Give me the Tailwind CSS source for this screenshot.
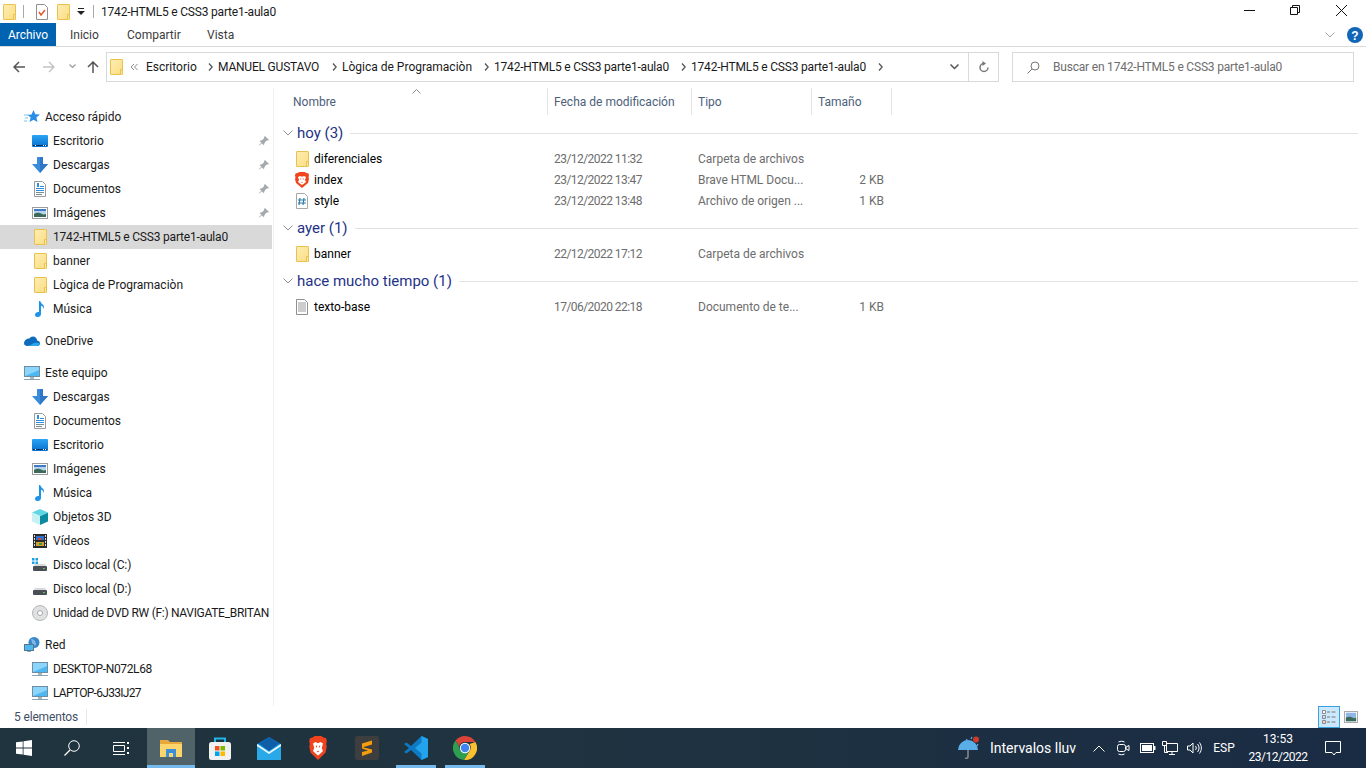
<!DOCTYPE html>
<html lang="es">
<head>
  <meta charset="UTF-8" />
  <title>1742-HTML5 e CSS3 parte1-aula0</title>
  <script src="https://cdn.jsdelivr.net/npm/@tailwindcss/browser@4"></script>
</head>
<body class="w-[1366px] h-[768px] overflow-hidden bg-white text-black text-[12px] leading-4 font-['Roboto',sans-serif] flex flex-col">

  <!-- shared icons -->
  <svg class="absolute w-0 h-0">
    <defs>
      <linearGradient id="skyG" x1="0" y1="0" x2="0" y2="1"><stop offset="0" stop-color="#2aa5f5"/><stop offset="1" stop-color="#0b6fd0"/></linearGradient>
      <linearGradient id="folderG" x1="0" y1="0" x2="1" y2="1"><stop offset="0" stop-color="#fdeeb5"/><stop offset="1" stop-color="#fcdc80"/></linearGradient>
    </defs>
    <symbol id="folder" viewBox="0 0 16 16">
      <rect x="2.500" y="0.500" width="12" height="15" rx="0.500" fill="url(#folderG)" stroke="#e8c24c"/>
      <path d="M12.500 15.500v-5h2v5" fill="#fbe6a0" stroke="#e8c24c"/>
    </symbol>
    <symbol id="desktop" viewBox="0 0 16 16">
      <rect x="0" y="2" width="16" height="12" rx="1" fill="url(#skyG)"/>
      <rect x="1" y="12" width="14" height="1" fill="#06345f"/>
      <rect x="3" y="12" width="1" height="1" fill="#fff"/><rect x="11" y="12" width="1" height="1" fill="#fff"/><rect x="13" y="12" width="1" height="1" fill="#fff"/>
    </symbol>
    <symbol id="download" viewBox="0 0 16 16">
      <path d="M5 0h6v7h5l-8 9-8-9h5z" fill="#3a8bdc"/>
      <path d="M8 0h3v7h5l-8 9z" fill="#2f78c6"/>
    </symbol>
    <symbol id="docs" viewBox="0 0 16 16">
      <path d="M2.500.5h8l3 3v12h-11z" fill="#fff" stroke="#9a9a9a"/>
      <path d="M5 2h2v4H5zM8 5h4v1H8zM4 7h8v1H4zM4 9h8v1H4z" fill="#2a8fe0"/>
      <path d="M4 11h8v1H4zM4 13h6v1H4z" fill="#7a8f8f"/>
    </symbol>
    <symbol id="images" viewBox="0 0 16 16">
      <rect x="0.500" y="2.500" width="15" height="11" fill="#fff" stroke="#9c9c9c"/>
      <rect x="2" y="4" width="12" height="8" fill="#b9d3ef"/>
      <path d="M2 9c3-2 6-1 8 0s3 0 4 0v3H2z" fill="#3c6a58"/>
      <path d="M2 4h12v2H2z" fill="#3f7cc8"/>
    </symbol>
    <symbol id="music" viewBox="0 0 16 16">
      <path d="M7 0h1.300c.4 3 4.700 3.500 3.700 8-.5-2-2-3-3-3.200V13c0 1.800-1.500 3-3.300 3C4.200 16 3 15.100 3 13.700c0-1.500 1.700-2.700 3.200-2.700.3 0 .6 0 .8.100z" fill="#1b93ea"/>
    </symbol>
    <symbol id="onedrive" viewBox="0 0 16 16">
      <path d="M3.500 13h9.500c1.700 0 3-1.100 3-2.600 0-1.400-1.100-2.500-2.600-2.600C13 5.500 11.200 3.500 9.100 3.500 7.500 3.500 6.200 4.300 5.400 5.500 2.600 5.500 .3 7.600 0 10.200 0 11.900 1.500 13 3.500 13z" fill="#0f6cbd"/>
      <path d="M3.500 13h9.500c1.700 0 3-1.100 3-2.600-3-.9-4.300-.9-6-.3-2 .7-3 2.200-6.500 2.900z" fill="#28a8ea"/>
    </symbol>
    <symbol id="pc" viewBox="0 0 16 16">
      <rect x="0.500" y="1.500" width="15" height="10" fill="#4db7f2" stroke="#6d8ea3"/>
      <path d="M1 2h14v3C11 7 6 9 1 11z" fill="#8bd5fa"/>
      <path d="M6 12h4v2H6z" fill="#a7b5bc"/>
      <path d="M0 14h16v1H0z" fill="#8ea4b2"/>
    </symbol>
    <symbol id="cube" viewBox="0 0 16 16">
      <path d="M8 7l8-3.500v9L8 16z" fill="#0c8aa0"/>
      <path d="M8 7L0 3.500 8 0l8 3.500z" fill="#5fd6e4"/>
      <path d="M0 3.500L8 7v9l-8-3.500z" fill="#c6f0f2"/>
    </symbol>
    <symbol id="video" viewBox="0 0 16 16">
      <rect x="1" y="1" width="14" height="14" fill="#2b2b2b"/>
      <path d="M4 3h8v4H4z" fill="#2e6fd0"/><path d="M4 9h8v4H4z" fill="#d2a02e"/><path d="M6 5h3v2H6z" fill="#d2472e"/><path d="M7 10h3v2H7z" fill="#3c9a52"/>
      <path d="M2 2h1v2H2zM2 5h1v2H2zM2 8h1v2H2zM2 11h1v2H2zM13 2h1v2h-1zM13 5h1v2h-1zM13 8h1v2h-1zM13 11h1v2h-1z" fill="#d8d8d8"/>
    </symbol>
    <symbol id="disk" viewBox="0 0 16 16">
      <path d="M2 9l1-2h10l1 2z" fill="#d7dadd"/>
      <rect x="1" y="9" width="14" height="5" rx="1" fill="#4a4f55"/>
      <rect x="11" y="11" width="2" height="1" fill="#4fd34f"/>
    </symbol>
    <symbol id="diskwin" viewBox="0 0 16 16">
      <use href="#disk"/>
      <path d="M0 1h2.500v2.500H0zM3.500 1H6v2.500H3.500zM0 4.500h2.500V7H0zM3.500 4.500H6V7H3.500z" fill="#1ba1e2"/>
    </symbol>
    <symbol id="dvd" viewBox="0 0 16 16">
      <circle cx="8" cy="8" r="7.500" fill="#dfe1e2" stroke="#b5b7b8"/>
      <circle cx="8" cy="8" r="2.500" fill="#fff" stroke="#a8a8a8"/>
    </symbol>
    <symbol id="network" viewBox="0 0 16 16">
      <circle cx="10" cy="5.500" r="5.500" fill="#3a86c8"/>
      <path d="M7 2c3 0 5 2 5 6l-3 1z" fill="#7db8e6"/>
      <rect x="0.500" y="7.500" width="9" height="6" fill="#4db7f2" stroke="#56788c"/>
      <path d="M3 14h4v1H3z" fill="#8ea4b2"/>
    </symbol>
    <symbol id="pin" viewBox="0 0 12 12">
      <path d="M7 1l4 4-1 .5-1.500 0L6.500 8l-.3 1.500L5.500 10 3.700 8.200 1.500 10.500 1 10l2.300-2.200L1.700 6.200l.8-.8 1.500-.2L6.200 3V1.800z" fill="#a3a9ae"/>
    </symbol>
    <symbol id="brave" viewBox="0 0 16 16">
      <path d="M3.500 1L5.500 0h5l2 1 2 .5.500 2-.5 2 .5 1.500-1 4-3 2.500L8 16l-3-2.500-3-2.500-1-4 .5-1.500-.5-2 .5-2z" fill="#f1441d"/>
      <path d="M4 5l2-1 2 .8L10 4l2 1-1 3 1 2-2.500 2L8 13l-1.500-1L4 10l1-2z" fill="#fff"/>
      <path d="M6 6.500h1.300L7 8zM10 6.500H8.700L9 8zM7 10h2l-1 1z" fill="#f1441d"/>
    </symbol>
    <symbol id="hashfile" viewBox="0 0 16 16">
      <path d="M2.500.5h8l3 3v12h-11z" fill="#fff" stroke="#a8a8a8"/>
      <path d="M6 5l-1 7M10 5l-1 7M4 7h8M4 10h8" stroke="#2f7fa8" stroke-width="1.200" fill="none"/>
    </symbol>
    <symbol id="textfile" viewBox="0 0 16 16">
      <path d="M2.500.5h8l3 3v12h-11z" fill="#fff" stroke="#8f8f8f"/>
      <path d="M4 4h8M4 6h8M4 8h8M4 10h8M4 12h8" stroke="#9a9a9a" fill="none"/>
    </symbol>
    <symbol id="crumb" viewBox="0 0 5 8">
      <path d="M1 .5L4.200 4 1 7.500" stroke="#555" stroke-width="1.300" fill="none"/>
    </symbol>
  </svg>

  <!-- title bar -->
  <div class="h-[23px] shrink-0 flex items-center relative">
    <svg class="w-4 h-4 ml-[1px]"><use href="#folder"/></svg>
    <div class="w-px h-[13px] bg-[#a9a9a9] ml-[6px]"></div>
    <svg class="w-4 h-4 ml-[10px]" viewBox="0 0 16 16"><path d="M2.500.5h8l3 3v12h-11z" fill="#fff" stroke="#8f8f8f"/><path d="M5 8l2 3 4-5" stroke="#e2572b" stroke-width="1.500" fill="none"/></svg>
    <svg class="w-4 h-4 ml-[5px]"><use href="#folder"/></svg>
    <svg class="w-[8px] h-[8px] ml-[6px]" viewBox="0 0 8 8"><path d="M1 0h6v1H1zM0 3h8L4 7z" fill="#222"/></svg>
    <div class="w-px h-[13px] bg-[#a9a9a9] ml-[8px]"></div>
    <div class="ml-[7px] text-[#1a1a1a] tracking-[-0.2px]">1742-HTML5 e CSS3 parte1-aula0</div>
    <div class="ml-auto flex items-center">
      <svg class="w-[46px] h-[23px]" viewBox="0 0 46 23"><path d="M17 10.500h11" stroke="#111" fill="none"/></svg>
      <svg class="w-[46px] h-[23px]" viewBox="0 0 46 23"><path d="M17.500 7.500h7v7h-7zM19.500 7.500v-2h7v7h-2" stroke="#111" fill="none"/></svg>
      <svg class="w-[46px] h-[23px]" viewBox="0 0 46 23"><path d="M17 5l11 11M28 5L17 16" stroke="#111" fill="none"/></svg>
      <div class="w-[1px]"></div>
    </div>
  </div>

  <!-- ribbon tabs -->
  <div class="h-[24px] shrink-0 flex items-stretch border-b border-[#dadbdc] text-[#3b3b3b]">
    <div class="w-[56px] bg-[#0063b1] text-white flex items-center justify-center">Archivo</div>
    <div class="ml-[14px] w-[57px] flex items-center">Inicio</div>
    <div class="w-[80px] flex items-center">Compartir</div>
    <div class="flex items-center">Vista</div>
    <div class="ml-auto flex items-center pr-[3px]">
      <svg class="w-[10px] h-[6px]" viewBox="0 0 10 6"><path d="M.5.500L5 5 9.500.500" stroke="#a5a5a5" fill="none"/></svg>
      <svg class="w-4 h-4 ml-[12px]" viewBox="0 0 16 16"><circle cx="8" cy="8" r="8" fill="#1266b8"/><text x="8" y="12.500" text-anchor="middle" font-size="12" font-weight="700" fill="#fff" font-family="Liberation Sans">?</text></svg>
    </div>
  </div>

  <!-- address row -->
  <div class="h-[41px] shrink-0 flex items-start pt-[5px]">
    <svg class="w-3 h-3 ml-[13px] mt-[9px]" viewBox="0 0 12 12"><path d="M6 1L1 6l5 5M1 6h11" stroke="#555" stroke-width="1.500" fill="none"/></svg>
    <svg class="w-3 h-3 ml-[18px] mt-[9px]" viewBox="0 0 12 12"><path d="M6 1l5 5-5 5M11 6H0" stroke="#c4c4c4" stroke-width="1.500" fill="none"/></svg>
    <svg class="w-[7px] h-[5px] ml-[14px] mt-[12px]" viewBox="0 0 7 5"><path d="M.5.500L3.500 3.500 6.500.500" stroke="#9a9a9a" stroke-width="1.200" fill="none"/></svg>
    <svg class="w-3 h-3 ml-[11px] mt-[9px]" viewBox="0 0 12 12"><path d="M1 6l5-5 5 5M6 1v11" stroke="#555" stroke-width="1.500" fill="none"/></svg>
    <div class="ml-[7px] w-[893px] h-[30px] border border-[#d9d9d9] flex items-center text-[#1a1a1a]">
      <svg class="w-4 h-4 ml-[1px] shrink-0"><use href="#folder"/></svg>
      <svg class="w-[8px] h-[8px] ml-[6px] shrink-0" viewBox="0 0 8 8"><path d="M4 1L1 4l3 3M7.500 1l-3 3 3 3" stroke="#8a8a8a" fill="none"/></svg>
      <div class="ml-[8px] w-[58px] shrink-0">Escritorio</div>
      <div class="w-[14px] shrink-0 flex justify-center pr-[1px]"><svg class="w-[5px] h-[8px]"><use href="#crumb"/></svg></div>
      <div class="w-[110px] shrink-0 tracking-[-0.2px]">MANUEL GUSTAVO</div>
      <div class="w-[14px] shrink-0 flex justify-center pr-[1px]"><svg class="w-[5px] h-[8px]"><use href="#crumb"/></svg></div>
      <div class="w-[138px] shrink-0">Lògica de Programaciòn</div>
      <div class="w-[14px] shrink-0 flex justify-center pr-[1px]"><svg class="w-[5px] h-[8px]"><use href="#crumb"/></svg></div>
      <div class="w-[183px] shrink-0 tracking-[-0.2px]">1742-HTML5 e CSS3 parte1-aula0</div>
      <div class="w-[14px] shrink-0 flex justify-center pr-[1px]"><svg class="w-[5px] h-[8px]"><use href="#crumb"/></svg></div>
      <div class="w-[183px] shrink-0 tracking-[-0.2px]">1742-HTML5 e CSS3 parte1-aula0</div>
      <div class="w-[14px] shrink-0 flex justify-center pr-[1px]"><svg class="w-[5px] h-[8px]"><use href="#crumb"/></svg></div>
      <div class="ml-auto flex items-stretch h-full">
        <div class="w-[28px] flex items-center justify-center border-r border-[#d9d9d9]">
          <svg class="w-[9px] h-[6px]" viewBox="0 0 9 6"><path d="M.5.500l4 4 4-4" stroke="#555" stroke-width="1.500" fill="none"/></svg>
        </div>
        <div class="w-[29px] flex items-center justify-center">
          <svg class="w-3 h-3" viewBox="0 0 12 12"><path d="M6 2.500a4 4 0 1 0 4 4" stroke="#777" stroke-width="1.500" fill="none"/><path d="M4.500 0v5L8 2.500z" fill="#777"/></svg>
        </div>
      </div>
    </div>
    <div class="ml-[13px] w-[342px] h-[30px] border border-[#d9d9d9] flex items-center text-[#6d6d6d]">
      <svg class="w-[13px] h-[13px] ml-[14px]" viewBox="0 0 13 13"><circle cx="8" cy="5" r="4" stroke="#777" fill="none"/><path d="M5 8l-4.500 4.500" stroke="#777" fill="none"/></svg>
      <div class="ml-[13px] tracking-[-0.2px]">Buscar en 1742-HTML5 e CSS3 parte1-aula0</div>
    </div>
  </div>

  <!-- main area -->
  <div class="flex-1 flex min-h-0">
    <!-- navigation pane -->
    <div class="w-[274px] shrink-0 border-r border-[#f0f0f0] overflow-hidden pt-[17px] text-[#1a1a1a]">
      <div class="w-[272px] flex flex-col">
        <div class="h-6 flex items-center pl-6 gap-[5px]"><svg class="w-4 h-4" viewBox="0 0 16 16"><path d="M9.500 1l1.800 4.200 4.700.4-3.600 3 1.100 4.500-4-2.400-4 2.400 1.100-4.500-3-2.600 3.900-.4z" fill="#2a8ee6"/><path d="M0 6h5M1 9h3M0 12h3" stroke="#7cc0f0" fill="none"/></svg><span>Acceso rápido</span></div>
        <div class="h-6 flex items-center pl-8 gap-[5px]"><svg class="w-4 h-4 shrink-0"><use href="#desktop"/></svg><span>Escritorio</span><svg class="w-3 h-3 ml-auto mr-[2px]"><use href="#pin"/></svg></div>
        <div class="h-6 flex items-center pl-8 gap-[5px]"><svg class="w-4 h-4 shrink-0"><use href="#download"/></svg><span>Descargas</span><svg class="w-3 h-3 ml-auto mr-[2px]"><use href="#pin"/></svg></div>
        <div class="h-6 flex items-center pl-8 gap-[5px]"><svg class="w-4 h-4 shrink-0"><use href="#docs"/></svg><span>Documentos</span><svg class="w-3 h-3 ml-auto mr-[2px]"><use href="#pin"/></svg></div>
        <div class="h-6 flex items-center pl-8 gap-[5px]"><svg class="w-4 h-4 shrink-0"><use href="#images"/></svg><span>Imágenes</span><svg class="w-3 h-3 ml-auto mr-[2px]"><use href="#pin"/></svg></div>
        <div class="h-6 flex items-center pl-8 gap-[5px] bg-[#d9d9d9]"><svg class="w-4 h-4 shrink-0"><use href="#folder"/></svg><span class="tracking-[-0.2px]">1742-HTML5 e CSS3 parte1-aula0</span></div>
        <div class="h-6 flex items-center pl-8 gap-[5px]"><svg class="w-4 h-4 shrink-0"><use href="#folder"/></svg><span>banner</span></div>
        <div class="h-6 flex items-center pl-8 gap-[5px]"><svg class="w-4 h-4 shrink-0"><use href="#folder"/></svg><span>Lògica de Programaciòn</span></div>
        <div class="h-6 flex items-center pl-8 gap-[5px]"><svg class="w-4 h-4 shrink-0"><use href="#music"/></svg><span>Música</span></div>

        <div class="h-6 mt-2 flex items-center pl-6 gap-[5px]"><svg class="w-4 h-4 shrink-0"><use href="#onedrive"/></svg><span>OneDrive</span></div>

        <div class="h-6 mt-2 flex items-center pl-6 gap-[5px]"><svg class="w-4 h-4 shrink-0"><use href="#pc"/></svg><span>Este equipo</span></div>
        <div class="h-6 flex items-center pl-8 gap-[5px]"><svg class="w-4 h-4 shrink-0"><use href="#download"/></svg><span>Descargas</span></div>
        <div class="h-6 flex items-center pl-8 gap-[5px]"><svg class="w-4 h-4 shrink-0"><use href="#docs"/></svg><span>Documentos</span></div>
        <div class="h-6 flex items-center pl-8 gap-[5px]"><svg class="w-4 h-4 shrink-0"><use href="#desktop"/></svg><span>Escritorio</span></div>
        <div class="h-6 flex items-center pl-8 gap-[5px]"><svg class="w-4 h-4 shrink-0"><use href="#images"/></svg><span>Imágenes</span></div>
        <div class="h-6 flex items-center pl-8 gap-[5px]"><svg class="w-4 h-4 shrink-0"><use href="#music"/></svg><span>Música</span></div>
        <div class="h-6 flex items-center pl-8 gap-[5px]"><svg class="w-4 h-4 shrink-0"><use href="#cube"/></svg><span>Objetos 3D</span></div>
        <div class="h-6 flex items-center pl-8 gap-[5px]"><svg class="w-4 h-4 shrink-0"><use href="#video"/></svg><span>Vídeos</span></div>
        <div class="h-6 flex items-center pl-8 gap-[5px]"><svg class="w-4 h-4 shrink-0"><use href="#diskwin"/></svg><span class="tracking-[-0.15px]">Disco local (C:)</span></div>
        <div class="h-6 flex items-center pl-8 gap-[5px]"><svg class="w-4 h-4 shrink-0"><use href="#disk"/></svg><span class="tracking-[-0.15px]">Disco local (D:)</span></div>
        <div class="h-6 flex items-center pl-8 gap-[5px]"><svg class="w-4 h-4 shrink-0"><use href="#dvd"/></svg><span class="whitespace-nowrap tracking-[-0.3px]">Unidad de DVD RW (F:) NAVIGATE_BRITAN</span></div>

        <div class="h-6 mt-2 flex items-center pl-6 gap-[5px]"><svg class="w-4 h-4 shrink-0"><use href="#network"/></svg><span>Red</span></div>
        <div class="h-6 flex items-center pl-8 gap-[5px]"><svg class="w-4 h-4 shrink-0"><use href="#pc"/></svg><span class="tracking-[-0.35px]">DESKTOP-N072L68</span></div>
        <div class="h-6 flex items-center pl-8 gap-[5px]"><svg class="w-4 h-4 shrink-0"><use href="#pc"/></svg><span class="tracking-[-0.7px]">LAPTOP-6J33IJ27</span></div>
      </div>
    </div>

    <!-- file list -->
    <div class="flex-1 min-w-0 pr-2">
      <div class="h-[27px] flex items-stretch text-[#4c607a] relative">
        <div class="w-[274px] pl-[19px] pt-[6px] border-r border-[#e5e5e5]">Nombre</div>
        <div class="w-[144px] pl-[6px] pt-[6px] border-r border-[#e5e5e5]">Fecha de modificación</div>
        <div class="w-[120px] pl-[6px] pt-[6px] border-r border-[#e5e5e5]">Tipo</div>
        <div class="w-[80px] pl-[6px] pt-[6px] border-r border-[#e5e5e5]">Tamaño</div>
        <svg class="absolute left-[138px] top-[1px] w-[9px] h-[5px]" viewBox="0 0 9 5"><path d="M.5 4.500l4-4 4 4" stroke="#8a8a8a" fill="none"/></svg>
      </div>

      <div class="mt-[7px] h-[22px] flex items-center pl-[9px] text-[#1e3287] text-[15px]">
        <svg class="w-[10px] h-[6px] mr-[4px]" viewBox="0 0 10 6"><path d="M.5.500L5 5 9.500.500" stroke="#8a8f98" fill="none"/></svg>
        <span>hoy (3)</span><div class="flex-1 h-px bg-[#e2e2e2] ml-[7px]"></div>
      </div>
      <div class="mt-[4px] flex flex-col">
        <div class="h-[21px] flex items-center"><div class="w-[273px] pl-[20px] flex items-center gap-[4px]"><svg class="w-4 h-4 shrink-0"><use href="#folder"/></svg><span>diferenciales</span></div><div class="w-[144px] pl-[7px] text-[#6d6d6d] tracking-[-0.55px]">23/12/2022 11:32</div><div class="w-[120px] pl-[7px] text-[#6d6d6d]">Carpeta de archivos</div></div>
        <div class="h-[21px] flex items-center"><div class="w-[273px] pl-[20px] flex items-center gap-[4px]"><svg class="w-4 h-4 shrink-0"><use href="#brave"/></svg><span>index</span></div><div class="w-[144px] pl-[7px] text-[#6d6d6d] tracking-[-0.55px]">23/12/2022 13:47</div><div class="w-[120px] pl-[7px] text-[#6d6d6d]">Brave HTML Docu...</div><div class="w-[73px] text-right text-[#6d6d6d]">2 KB</div></div>
        <div class="h-[21px] flex items-center"><div class="w-[273px] pl-[20px] flex items-center gap-[4px]"><svg class="w-4 h-4 shrink-0"><use href="#hashfile"/></svg><span>style</span></div><div class="w-[144px] pl-[7px] text-[#6d6d6d] tracking-[-0.55px]">23/12/2022 13:48</div><div class="w-[120px] pl-[7px] text-[#6d6d6d]">Archivo de origen ...</div><div class="w-[73px] text-right text-[#6d6d6d]">1 KB</div></div>
      </div>

      <div class="mt-[6px] h-[22px] flex items-center pl-[9px] text-[#1e3287] text-[15px]">
        <svg class="w-[10px] h-[6px] mr-[4px]" viewBox="0 0 10 6"><path d="M.5.500L5 5 9.500.500" stroke="#8a8f98" fill="none"/></svg>
        <span>ayer (1)</span><div class="flex-1 h-px bg-[#e2e2e2] ml-[7px]"></div>
      </div>
      <div class="mt-[4px] flex flex-col">
        <div class="h-[21px] flex items-center"><div class="w-[273px] pl-[20px] flex items-center gap-[4px]"><svg class="w-4 h-4 shrink-0"><use href="#folder"/></svg><span>banner</span></div><div class="w-[144px] pl-[7px] text-[#6d6d6d] tracking-[-0.55px]">22/12/2022 17:12</div><div class="w-[120px] pl-[7px] text-[#6d6d6d]">Carpeta de archivos</div></div>
      </div>

      <div class="mt-[6px] h-[22px] flex items-center pl-[9px] text-[#1e3287] text-[15px]">
        <svg class="w-[10px] h-[6px] mr-[4px]" viewBox="0 0 10 6"><path d="M.5.500L5 5 9.500.500" stroke="#8a8f98" fill="none"/></svg>
        <span>hace mucho tiempo (1)</span><div class="flex-1 h-px bg-[#e2e2e2] ml-[7px]"></div>
      </div>
      <div class="mt-[4px] flex flex-col">
        <div class="h-[21px] flex items-center"><div class="w-[273px] pl-[20px] flex items-center gap-[4px]"><svg class="w-4 h-4 shrink-0"><use href="#textfile"/></svg><span>texto-base</span></div><div class="w-[144px] pl-[7px] text-[#6d6d6d] tracking-[-0.55px]">17/06/2020 22:18</div><div class="w-[120px] pl-[7px] text-[#6d6d6d]">Documento de te...</div><div class="w-[73px] text-right text-[#6d6d6d]">1 KB</div></div>
      </div>
    </div>
  </div>

  <!-- status bar -->
  <div class="h-[22px] shrink-0 flex items-center bg-white text-[#3f4f66]">
    <div class="ml-[14px] pr-[8px] border-r border-[#e8e8e8] tracking-[-0.15px]">5 elementos</div>
    <div class="ml-auto flex items-center mr-[8px] h-full">
      <div class="w-[22px] h-[22px] bg-[#cce8ff] border border-[#3ba0e0] flex items-center justify-center">
        <svg class="w-4 h-4" viewBox="0 0 16 16"><path d="M1.500 1.500h3v3h-3zM1.500 6.500h3v3h-3zM1.500 11.500h3v3h-3z" fill="#fff" stroke="#8a8a8a"/><path d="M2.500 7.500h1v1h-1z" fill="#2a7fd8"/><path d="M2.500 12.500h1v1h-1z" fill="#d8352a"/><path d="M6 3h3M10.500 3h4M6 8h3M10.500 8h4M6 13h3M10.500 13h4" stroke="#777" fill="none"/></svg>
      </div>
      <svg class="w-[14px] h-[12px] ml-[4px]" viewBox="0 0 16 14"><rect x=".5" y=".5" width="15" height="13" fill="#fff" stroke="#9c9c9c"/><rect x="2" y="2" width="12" height="10" fill="#8fb6e6"/><path d="M2 8c3-2 6-1 8 0s3 0 4 0v4H2z" fill="#3c6a58"/></svg>
    </div>
  </div>

  <!-- taskbar -->
  <div class="h-10 shrink-0 flex items-stretch bg-[linear-gradient(90deg,#20343f_0%,#1f3340_40%,#1a2c44_100%)] text-white">
    <div class="w-12 flex items-center justify-center"><svg class="w-4 h-4" viewBox="0 0 16 16"><path d="M0 2.300l6.700-.9v6.200H0zM7.500 1.300L16 0v7.600H7.500zM0 8.400h6.700v6.200L0 13.700zM7.500 8.400H16V16l-8.500-1.200z" fill="#fff"/></svg></div>
    <div class="w-12 flex items-center justify-center"><svg class="w-4 h-4" viewBox="0 0 16 16"><circle cx="10" cy="6" r="5.300" stroke="#fff" fill="none"/><path d="M6 10l-5.500 5.500" stroke="#fff" stroke-width="1.200" fill="none"/></svg></div>
    <div class="w-12 flex items-center justify-center"><svg class="w-[17px] h-4" viewBox="0 0 17 16"><path d="M1.500 5.500h11v6h-11zM1 2.500h12M1 14.500h12" stroke="#fff" fill="none"/><path d="M15 2h2v2h-2zM15 7h2v2h-2zM15 12h2v2h-2z" fill="#fff"/></svg></div>
    <div class="w-12 ml-[3px] bg-[#4f6369] border-b-[3px] border-[#76b9ed] flex items-center justify-center">
      <svg class="w-[22px] h-[18px] mt-[3px]" viewBox="0 0 22 18"><path d="M0 1h8l2 2h12v15H0z" fill="#e8a93c"/><path d="M0 5h22v13H0z" fill="#fbd66c"/><path d="M6 10h10v8H6z" fill="#3b8ed8"/><path d="M9 14h4v4H9z" fill="#fbd66c"/></svg>
    </div>
    <div class="w-12 ml-[1px] flex items-center justify-center">
      <svg class="w-6 h-6" viewBox="0 0 24 24"><path d="M7 7V2.500h10V7" stroke="#1fb6e8" stroke-width="2" fill="none"/><rect x="1" y="6" width="22" height="18" rx="2.500" fill="#f1f1f1"/><path d="M7 10h4.500v4.500H7z" fill="#f25022"/><path d="M12.500 10H17v4.500h-4.500z" fill="#7fba00"/><path d="M7 15.500h4.500V20H7z" fill="#00a4ef"/><path d="M12.500 15.500H17V20h-4.500z" fill="#ffb900"/></svg>
    </div>
    <div class="w-[49px] flex items-center justify-center">
      <svg class="w-6 h-[23px]" viewBox="0 0 24 23"><path d="M0 7l12-7 12 7v16H0z" fill="#0a6fc0"/><path d="M0 7h24v16H0z" fill="#2aa9e8"/><path d="M0 7l12 8 12-8v2l-12 8L0 9z" fill="#f4fbff"/><path d="M2 7l10-6 10 6-10 7z" fill="#0f5fa8"/></svg>
    </div>
    <div class="w-[49px] flex items-center justify-center">
      <svg class="w-5 h-6" viewBox="0 0 16 16" preserveAspectRatio="none"><use href="#brave"/></svg>
    </div>
    <div class="w-[49px] flex items-center justify-center">
      <svg class="w-6 h-6" viewBox="0 0 24 24"><rect width="24" height="24" rx="2" fill="#3e3e3e"/><path d="M17 4.500v4L7 11.500v-4zM7 11l10 2.500v3L7 20v-4l6-1.500-6-2z" fill="#f59e0b"/></svg>
    </div>
    <div class="w-[49px] flex flex-col items-center justify-center relative">
      <svg class="w-6 h-6" viewBox="0 0 24 24"><path d="M17.500 0L24 3v18l-6.500 3L7 14l-4.500 3.500L0 16l5-4-5-4 2.500-1.500L7 10z" fill="#0f7ac4"/><path d="M17.500 0L24 3v18l-6.500 3zM17.500 6.500L11 12l6.500 5.500z" fill="#22a3ec"/></svg>
      <div class="absolute bottom-0 left-[5px] right-[4px] h-[3px] bg-[#76b9ed]"></div>
    </div>
    <div class="w-[49px] flex flex-col items-center justify-center relative">
      <svg class="w-6 h-6" viewBox="0 0 24 24"><path d="M12 0a12 12 0 0 1 10.400 6H12a6 6 0 0 0-5.800 4.500L2.600 4.500A12 12 0 0 1 12 0z" fill="#dc4437"/><path d="M22.400 6A12 12 0 0 1 11 24l5.200-8.600A6 6 0 0 0 16.500 8z" fill="#fbc02d"/><path d="M2.600 4.500A12 12 0 0 0 11 24l5.200-8.600a6 6 0 0 1-10-4.500z" fill="#2e9e4f"/><circle cx="12" cy="12" r="5.200" fill="#fff"/><circle cx="12" cy="12" r="4.200" fill="#3f84ee"/></svg>
      <div class="absolute bottom-0 left-[5px] right-[4px] h-[3px] bg-[#76b9ed]"></div>
    </div>

    <!-- tray -->
    <div class="ml-auto flex items-center">
      <svg class="w-6 h-6" viewBox="0 0 24 24"><path d="M1 14a10 10 0 0 1 20 0z" fill="#5aaee8"/><path d="M11 14v7a2 2 0 0 1-3 1" stroke="#8a8a8a" stroke-width="1.500" fill="none"/><circle cx="19" cy="3.500" r="3" fill="#d13a2a"/><path d="M10 3l-1 2M15 1l-1 2M21 8l-1 2" stroke="#5aaee8" stroke-width="1.200"/></svg>
      <div class="ml-[9px] w-[94px] text-[14px] whitespace-nowrap overflow-hidden">Intervalos lluv</div>
      <svg class="w-[12px] h-[7px] ml-[9px]" viewBox="0 0 12 7"><path d="M.5 6.500L6 1l5.500 5.500" stroke="#fff" fill="none"/></svg>
      <svg class="w-4 h-4 ml-[10px]" viewBox="0 0 16 16"><rect x="2.500" y="4.500" width="8" height="7" rx="2" stroke="#fff" fill="none"/><path d="M11 7l3-1.500v5L11 9zM3.500 2c2-1 4-1 6 0M3.500 14c2 1 4 1 6 0" stroke="#fff" fill="none"/></svg>
      <svg class="w-4 h-4 ml-[9px]" viewBox="0 0 16 16"><rect x=".5" y="3.500" width="13" height="9" stroke="#fff" fill="none"/><rect x="2" y="5" width="10" height="6" fill="#fff"/><path d="M14 6h1.500v4H14z" fill="#fff"/></svg>
      <svg class="w-4 h-4 ml-[6px]" viewBox="0 0 16 16"><path d="M4.500 3.500h11v8h-11zM10 11.500v3M7 14.500h6M0.500 1.500h4v4h-4zM2.500 5.500v7H6" stroke="#fff" fill="none"/></svg>
      <svg class="w-4 h-4 ml-[8px]" viewBox="0 0 16 16"><path d="M1.500 6v4h2.500l3 3V3L4 6z" stroke="#fff" fill="none"/><path d="M9.500 6c1 1.300 1 2.700 0 4M11.500 4c2 2.500 2 5.500 0 8M13.500 2.500c2.500 3.500 2.500 7.500 0 11" stroke="#fff" fill="none"/></svg>
      <div class="ml-[10px] w-[24px] text-center">ESP</div>
      <div class="ml-[12px] w-[60px] text-center leading-[18px]"><div>13:53</div><div class="tracking-[-0.5px]">23/12/2022</div></div>
      <svg class="w-4 h-4 ml-[17px]" viewBox="0 0 16 16"><path d="M.5 1.500h15v11H11l-2 2.500-2-2.500H.5z" stroke="#fff" fill="none"/></svg>
      <div class="w-[25px]"></div>
    </div>
  </div>
</body>
</html>
